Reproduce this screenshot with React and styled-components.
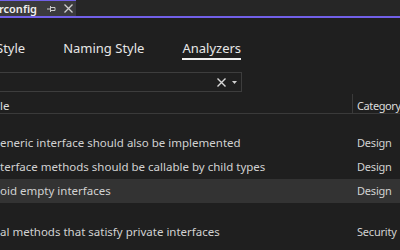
import React from "react";
import styled, { createGlobalStyle } from "styled-components";

const Global = createGlobalStyle`
  html, body { margin: 0; padding: 0; background: #1f1f1f; }
  body { width: 400px; height: 250px; overflow: hidden; font-family: "Noto Sans", "Open Sans", sans-serif; }
`;

const Page = styled.div`
  width: 400px;
  height: 250px;
  overflow: hidden;
  background: #1f1f1f;
  color: #dcdcdc;
`;

const TabStrip = styled.div`
  display: flex;
  height: 16px;
  background: #262626;
  border-bottom: 2px solid #7160e8;
`;

const DocTab = styled.div`
  display: flex;
  align-items: center;
  width: 76px;
  box-sizing: border-box;
  background: #3b3b3d;
  border-top: 1px solid #7160e8;
  font-size: 11px;
  font-weight: 600;
  color: #f0f0f0;
`;

const TabTitle = styled.span`
  margin-left: -1px;
  line-height: 15px;
`;

const TabIcon = styled.svg`
  display: block;
  flex: none;
  margin-left: ${(p) => p.$ml}px;
`;

const Body = styled.div`
  display: flex;
  flex-direction: column;
`;

const PageTabs = styled.nav`
  display: flex;
  gap: 38px;
  height: 30px;
  margin-top: 10px;
  margin-left: -4px;
  align-items: flex-start;
`;

const PageTab = styled.div`
  font-size: 13px;
  color: #e6e6e6;
  padding-top: 11px;
  line-height: 19px;
  border-bottom: 2px solid ${(p) => (p.$active ? "#f2f2f2" : "transparent")};
`;

const Search = styled.div`
  display: flex;
  align-items: center;
  justify-content: flex-end;
  gap: 6px;
  width: 246px;
  height: 20px;
  box-sizing: border-box;
  margin-top: 14px;
  margin-left: -4px;
  border: 1px solid #3d3d3d;
  padding-right: 4px;
`;

const HeaderRow = styled.div`
  display: grid;
  grid-template-columns: 352px 1fr;
  height: 21px;
  border-bottom: 1px solid #3a3a3a;
  font-size: 11.5px;
  color: #dcdcdc;
`;

const HeaderCell = styled.div`
  display: flex;
  align-items: flex-end;
  padding-left: ${(p) => (p.$sep ? 4 : 0)}px;
  border-left: ${(p) => (p.$sep ? "1px solid #3a3a3a" : "none")};
  margin-top: ${(p) => (p.$sep ? 2 : 0)}px;
  font-size: ${(p) => (p.$sep ? "11px" : "11.5px")};
  letter-spacing: ${(p) => (p.$sep ? "-0.4px" : "normal")};
  white-space: nowrap;
  line-height: 15px;
`;

const GroupGap = styled.div`
  height: 17px;
`;

const Row = styled.div`
  display: grid;
  grid-template-columns: 357px 1fr;
  align-items: center;
  height: 24px;
  background: ${(p) => (p.$selected ? "#333333" : "transparent")};
  font-size: 11.5px;
  color: #d2d2d2;
  white-space: nowrap;
`;

const Cell = styled.div`
  overflow: hidden;
  line-height: 16px;
  font-size: ${(p) => (p.$cat ? "11px" : "11.5px")};
  letter-spacing: ${(p) => (p.$cat ? "-0.2px" : "normal")};
`;

const rows = [
  { gap: true },
  { title: "eneric interface should also be implemented", cat: "Design" },
  { title: "terface methods should be callable by child types", cat: "Design" },
  { title: "oid empty interfaces", cat: "Design", selected: true },
  { gap: true },
  { title: "al methods that satisfy private interfaces", cat: "Security" },
];

export default function App() {
  return (
    <Page>
      <Global />
      <TabStrip>
        <DocTab>
          <TabTitle>rconfig</TabTitle>
          <TabIcon $ml={10} width="9" height="8" viewBox="0 0 9 8">
            <path d="M0 4h3M3.5 1v6M3.5 2.5h4.5v3h-4.5" stroke="#c8c8c8" strokeWidth="1" fill="none" />
          </TabIcon>
          <TabIcon $ml={8} width="9" height="9" viewBox="0 0 9 9">
            <path d="M0.5 0.5l8 8M8.5 0.5l-8 8" stroke="#cfcfcf" strokeWidth="1.3" fill="none" />
          </TabIcon>
        </DocTab>
      </TabStrip>
      <Body>
        <PageTabs>
          <PageTab>Style</PageTab>
          <PageTab>Naming Style</PageTab>
          <PageTab $active>Analyzers</PageTab>
        </PageTabs>
        <Search>
          <svg width="9" height="9" viewBox="0 0 9 9">
            <path d="M0.5 0.5l8 8M8.5 0.5l-8 8" stroke="#d8d8d8" strokeWidth="1.4" fill="none" />
          </svg>
          <svg width="5" height="3" viewBox="0 0 5 3">
            <path d="M0 0h5L2.5 3z" fill="#cfcfcf" />
          </svg>
        </Search>
        <HeaderRow>
          <HeaderCell>le</HeaderCell>
          <HeaderCell $sep>Category</HeaderCell>
        </HeaderRow>
        {rows.map((r, i) =>
          r.gap ? (
            <GroupGap key={i} />
          ) : (
            <Row key={i} $selected={r.selected}>
              <Cell>{r.title}</Cell>
              <Cell $cat>{r.cat}</Cell>
            </Row>
          )
        )}
      </Body>
    </Page>
  );
}
